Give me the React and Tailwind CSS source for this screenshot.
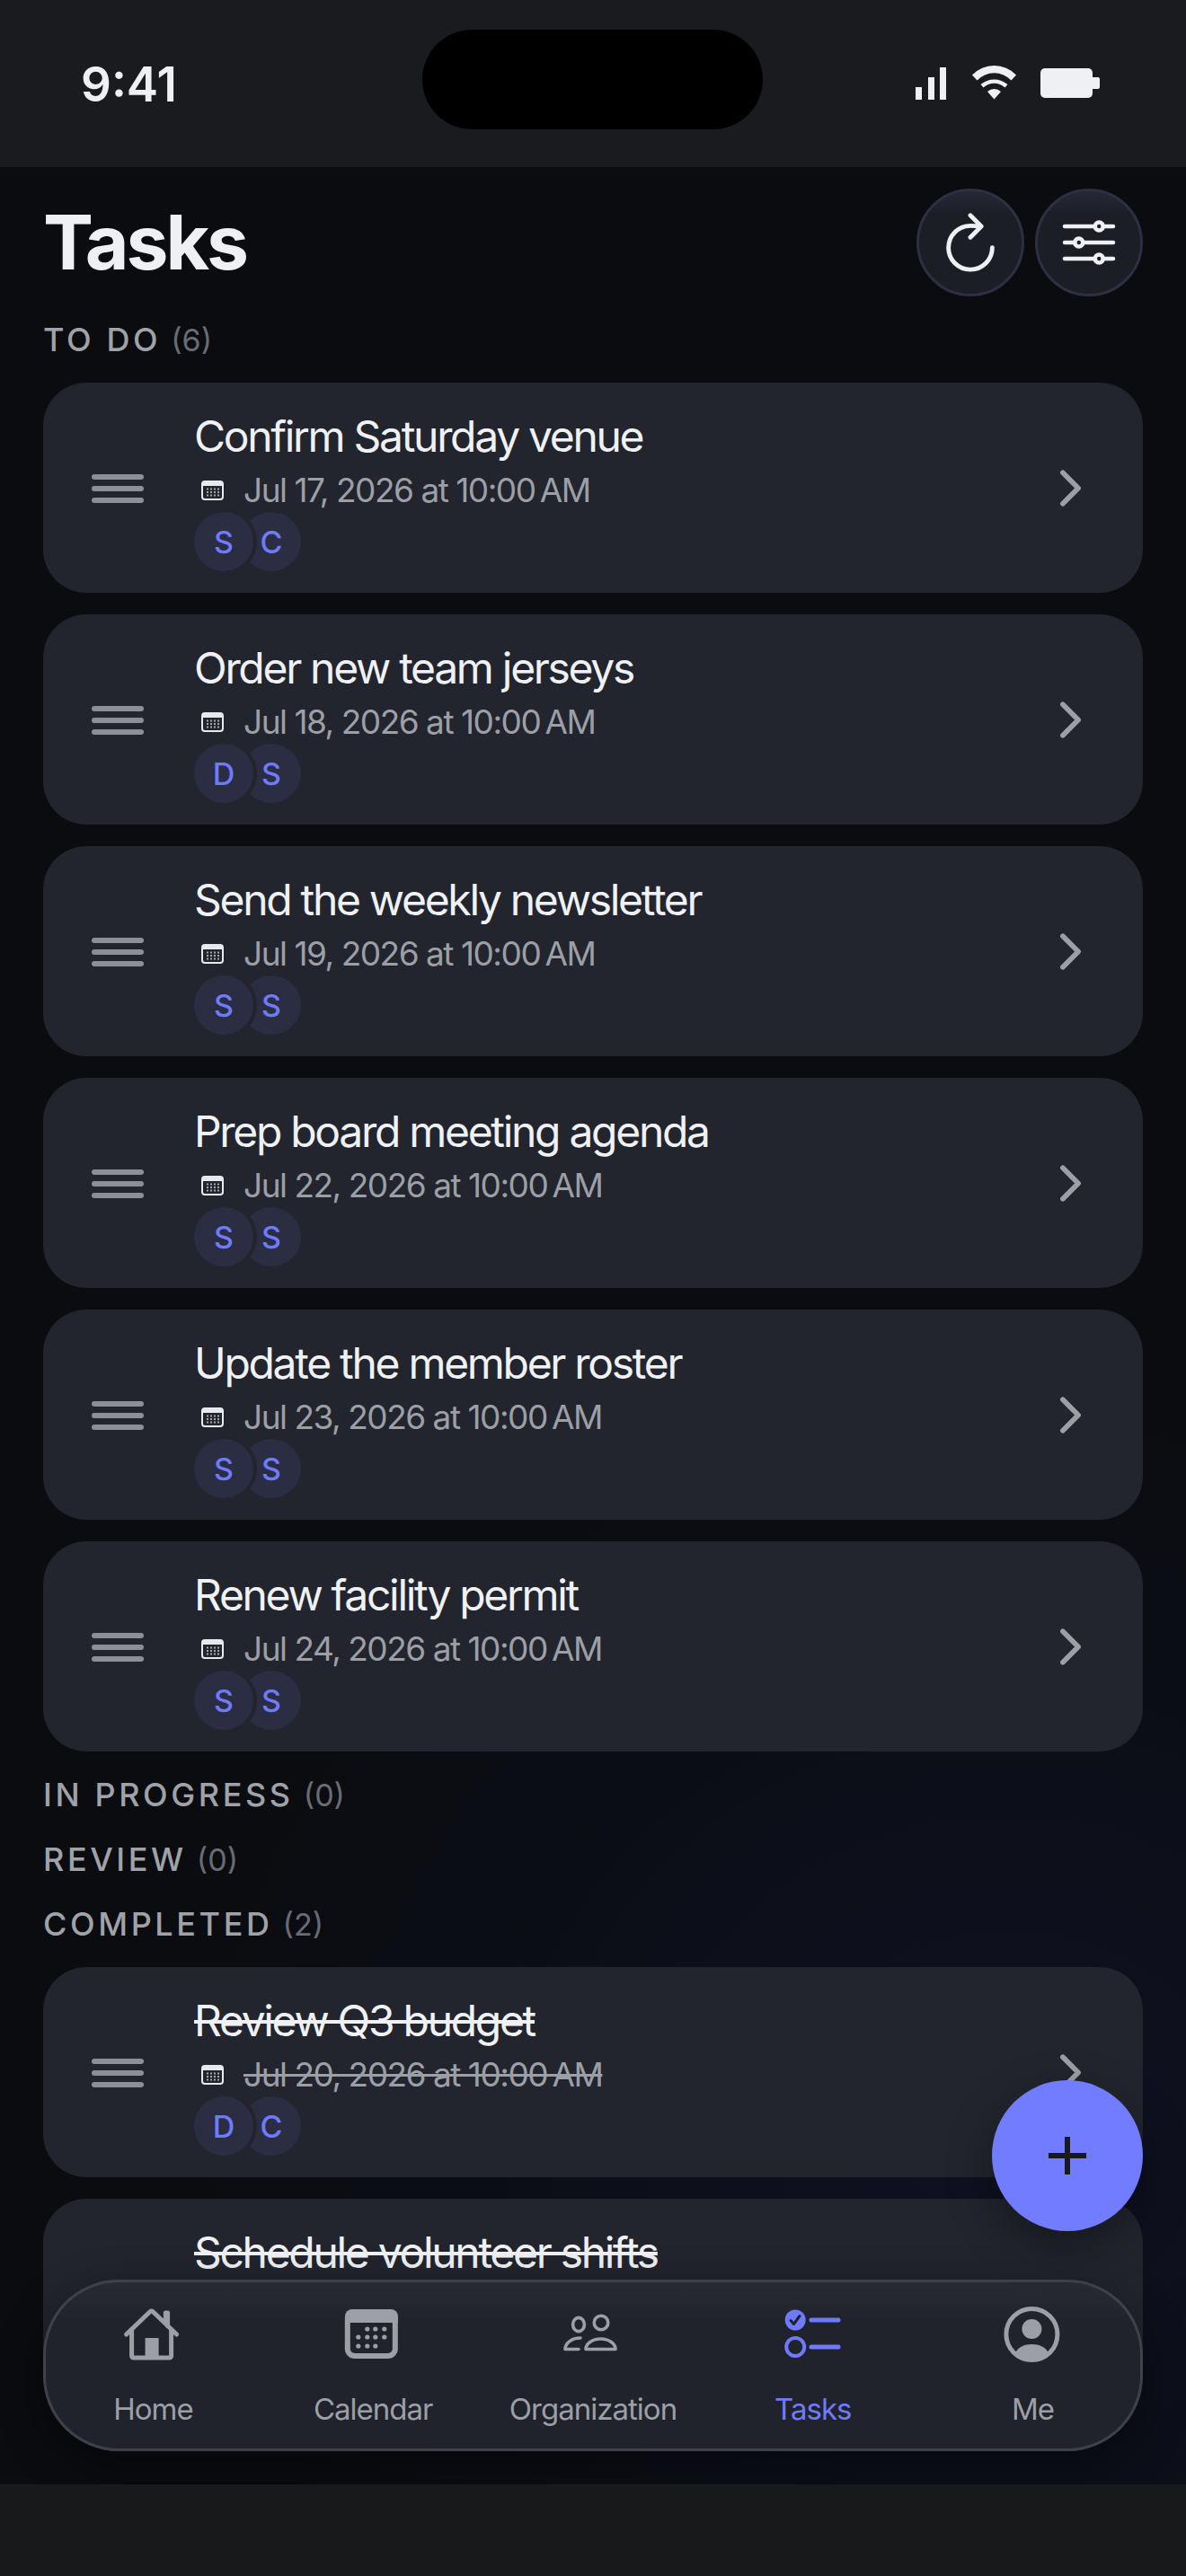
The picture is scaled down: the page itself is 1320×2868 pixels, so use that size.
import React from "react";
import { IoRefreshOutline, IoOptionsOutline, IoChevronForward } from "react-icons/io5";

const font = { fontFamily: "Inter, 'Noto Sans', sans-serif" };

function Handle() {
  return (
    <svg width="58" height="34" viewBox="0 0 58 34" fill="#8d8f96" className="shrink-0">
      <rect x="0" y="0" width="58" height="6" rx="3" />
      <rect x="0" y="13" width="58" height="6" rx="3" />
      <rect x="0" y="26" width="58" height="6" rx="3" />
    </svg>
  );
}

function SmallCal() {
  const xs = [7, 11, 15, 19];
  return (
    <svg width="25" height="22" viewBox="0 0 25 22" className="shrink-0 block">
      <rect x="1" y="1" width="23" height="20" rx="3" fill="#22252d" stroke="#e8e9ec" strokeWidth="2" />
      <path d="M1 6V4a3 3 0 0 1 3-3h17a3 3 0 0 1 3 3v2z" fill="#e8e9ec" />
      {[9.5, 13, 16.5].map((y) => xs.map((x) => <rect key={x + "-" + y} x={x - 1} y={y - 1} width="2" height="2" fill="#a5a7ad" />))}
    </svg>
  );
}

function Avatar({ l, first }) {
  return (
    <div
      className={
        first
          ? "relative z-10 w-[66px] h-[66px] rounded-full bg-[#2b2d42] flex items-center justify-center text-[34px] font-medium text-[#6f7bff] shadow-[0_0_0_4px_#22252d]"
          : "w-[66px] h-[66px] -ml-[13px] rounded-full bg-[#2b2d42] flex items-center justify-center text-[34px] font-medium text-[#6f7bff]"
      }
    >
      {l}
    </div>
  );
}

function Card({ title, date, a, b, done }) {
  return (
    <div className="w-full h-[234px] shrink-0 rounded-[48px] bg-[#22252d] flex items-start">
      <div className="ml-[54px] mt-[102px] w-[58px]">
        <Handle />
      </div>
      <div className="ml-[56px] pt-[30px] flex flex-col">
        <div className={"h-[60px] leading-[60px] text-[48px] tracking-[-0.048em] text-[#f0f1f4] " + (done ? "line-through" : "")}>{title}</div>
        <div className="h-[54px] pt-[6px] flex items-center">
          <div className="ml-2 mr-[22px]">
            <SmallCal />
          </div>
          <span className={"text-[37px] tracking-[-0.04em] text-[#9d9fa6] " + (done ? "line-through" : "")}>{date}</span>
        </div>
        <div className="flex h-[66px]">
          <Avatar l={a} first />
          <Avatar l={b} />
        </div>
      </div>
      <div className="ml-auto mr-[50px] mt-[87px] text-[#9d9fa6]">
        <IoChevronForward size={61} />
      </div>
    </div>
  );
}

function Label({ name, n }) {
  return (
    <div className="h-12 flex items-center shrink-0">
      <span className="text-[36px] font-medium tracking-[0.1em] text-[#a0a2a9]">{name}</span>
      <span className="ml-[11px] text-[34px] text-[#696c74]">({n})</span>
    </div>
  );
}

const G = "#9d9fa6";
const P = "#6f7bff";

function HomeIcon() {
  return (
    <svg width="66" height="66" viewBox="0 0 66 66" className="overflow-visible">
      <g transform="translate(-0.4 1) scale(.125)" fill="none" stroke={G} strokeWidth="40" strokeLinecap="round" strokeLinejoin="round">
        <path d="M80 212v236a16 16 0 0 0 16 16h320a16 16 0 0 0 16-16V212" />
        <path d="M480 256L266.89 52c-5-5.28-16.69-5.34-22 0L32 256" />
        <path d="M400 179V64h-18v69" />
      </g>
      <rect x="24.6" y="37" width="15" height="23" fill={G} />
    </svg>
  );
}

function CalIcon() {
  const rows = [
    [27, [26.8, 35.8, 45.8]],
    [36, [16.8, 26.8, 35.8, 45.8]],
    [46, [16.8, 26.8, 35.8]],
  ];
  return (
    <svg width="66" height="66" viewBox="0 0 66 66">
      <rect x="4.8" y="8" width="53" height="49" rx="8" fill="none" stroke={G} strokeWidth="6" />
      <path d="M2 20v-7a8 8 0 0 1 8-8h43a8 8 0 0 1 8 8v7z" fill={G} />
      {rows.map(([y, xs]) => xs.map((x) => <circle key={x + "-" + y} cx={x} cy={y} r="2.6" fill={G} />))}
    </svg>
  );
}

function OrgIcon() {
  return (
    <svg width="66" height="66" viewBox="0 0 66 66" className="overflow-visible" fill="none" stroke={G} strokeWidth="3.6" strokeLinecap="round" strokeLinejoin="round">
      <ellipse cx="17" cy="22" rx="6.4" ry="7.6" />
      <circle cx="42" cy="20" r="7.8" />
      <path d="M25 49.5c0-6 7-11.5 16.5-11.5S58 43.5 58 49.5z" />
      <path d="M19 37C9 37 2 43 2 49.5h15" />
    </svg>
  );
}

function TasksIcon() {
  return (
    <svg width="66" height="66" viewBox="0 0 66 66" className="overflow-visible" fill="none">
      <circle cx="13.2" cy="17" r="11.5" fill={P} />
      <path d="M8 17.5l3.5 4L18 12.5" stroke="#20232b" strokeWidth="3" strokeLinecap="round" strokeLinejoin="round" />
      <path d="M31 17h30M31 47h30" stroke={P} strokeWidth="5" strokeLinecap="round" />
      <circle cx="13.2" cy="47" r="10" stroke={P} strokeWidth="4" />
    </svg>
  );
}

function MeIcon() {
  return (
    <svg width="66" height="66" viewBox="0 0 66 66" fill="none">
      <circle cx="31.4" cy="33" r="28.5" stroke={G} strokeWidth="5" />
      <circle cx="31.4" cy="27" r="11" fill={G} />
      <path d="M13 54C16 47 23 44 31.4 44S47 47 50 54A28 28 0 0 1 13 54Z" fill={G} />
    </svg>
  );
}

function NavItem({ icon, label, active }) {
  return (
    <div className="flex-1 flex flex-col items-center">
      <div className="w-[66px] h-[66px]">{icon}</div>
      <div className={"mt-[26px] h-12 leading-[48px] text-[33px] tracking-[-0.03em] " + (active ? "text-[#6f7bff]" : "text-[#9d9fa6]")}>{label}</div>
    </div>
  );
}

const tasks = [
  ["Confirm Saturday venue", "Jul 17, 2026 at 10:00\u202fAM", "S", "C"],
  ["Order new team jerseys", "Jul 18, 2026 at 10:00\u202fAM", "D", "S"],
  ["Send the weekly newsletter", "Jul 19, 2026 at 10:00\u202fAM", "S", "S"],
  ["Prep board meeting agenda", "Jul 22, 2026 at 10:00\u202fAM", "S", "S"],
  ["Update the member roster", "Jul 23, 2026 at 10:00\u202fAM", "S", "S"],
  ["Renew facility permit", "Jul 24, 2026 at 10:00\u202fAM", "S", "S"],
];

export default function App() {
  return (
    <div style={font} className="relative w-[1320px] h-[2868px] flex flex-col overflow-hidden bg-[#1a1b1e]">
      <div className="relative h-[186px] shrink-0 bg-[#1a1b1e] flex items-start justify-between">
        <div className="ml-[90px] mt-[64px] text-[53px] leading-[60px] font-semibold text-[#eef0f3]">9:41</div>
        <div className="absolute left-[470px] top-[33px] w-[379px] h-[111px] rounded-full bg-black" />
        <svg width="210" height="40" viewBox="0 0 210 40" className="mt-[73px] mr-[94px]" fill="#eef0f3">
          <rect x="3" y="24" width="7" height="14" />
          <rect x="17" y="13" width="7" height="25" />
          <rect x="30" y="2" width="7" height="36" />
          <path d="M90.5 37.5L83 29a11 11 0 0 1 15 0zM78.5 24.5A17.500 17.500 0 0 1 102.500 24.500L105.500 21A23 23 0 0 0 75.500 21z" />
          <path d="M71.500 16.500A26 26 0 0 1 109.500 16.500L115 10.500A34 34 0 0 0 66 10.500z" />
          <rect x="142" y="3" width="58" height="33" rx="5" />
          <path d="M200 13h6a2 2 0 0 1 2 2v9a2 2 0 0 1-2 2h-6z" />
        </svg>
      </div>

      <div className="relative flex-1 min-h-0 overflow-hidden bg-[#0a0c10] bg-[radial-gradient(ellipse_900px_800px_at_85%_85%,#0f1122_0%,#0c0e18_55%,#0a0c10_100%)]">
        <div className="px-12 pt-6 flex flex-col gap-6">
          <div className="h-[120px] flex items-center justify-between shrink-0">
            <div className="text-[84px] leading-[120px] font-bold tracking-[-0.037em] text-[#eef0f3]">Tasks</div>
            <div className="flex gap-3">
              <div className="w-[120px] h-[120px] rounded-full border-[3px] border-[#2d3042] bg-[linear-gradient(#262838_0%,#1c1e26_22%,#1c1e26_100%)] flex items-center justify-center text-[#eef0f3]">
                <IoRefreshOutline size={78} />
              </div>
              <div className="w-[120px] h-[120px] rounded-full border-[3px] border-[#2d3042] bg-[linear-gradient(#262838_0%,#1c1e26_22%,#1c1e26_100%)] flex items-center justify-center text-[#eef0f3]">
                <IoOptionsOutline size={72} />
              </div>
            </div>
          </div>

          <Label name="TO DO" n={6} />
          {tasks.map(([t, d, a, b]) => (
            <Card key={t} title={t} date={d} a={a} b={b} />
          ))}
          <Label name="IN PROGRESS" n={0} />
          <Label name="REVIEW" n={0} />
          <Label name="COMPLETED" n={2} />
          <Card title="Review Q3 budget" date={"Jul 20, 2026 at 10:00\u202fAM"} a="D" b="C" done />
          <Card title="Schedule volunteer shifts" date={"Jul 21, 2026 at 10:00\u202fAM"} a="S" b="S" done />
        </div>

        <div className="absolute z-20 left-12 top-[2352px] w-[1224px] h-[191px] pt-7 rounded-[84px] flex bg-[linear-gradient(#282b34_0%,#20232b_24%,#20232b_100%)] shadow-[inset_0_0_0_3px_#3f414a,0_16px_50px_rgba(0,0,0,0.45)]">
          <NavItem icon={<HomeIcon />} label="Home" />
          <NavItem icon={<CalIcon />} label="Calendar" />
          <NavItem icon={<OrgIcon />} label="Organization" />
          <NavItem icon={<TasksIcon />} label="Tasks" active />
          <NavItem icon={<MeIcon />} label="Me" />
        </div>

        <div className="absolute z-30 left-[1104px] top-[2130px] w-[168px] h-[168px] rounded-full bg-[#717cff] flex items-center justify-center shadow-[0_18px_50px_rgba(0,0,0,0.35)]">
          <svg width="42" height="42" viewBox="0 0 42 42" stroke="#1a1b1e" strokeWidth="6">
            <path d="M21 0v42M0 21h42" />
          </svg>
        </div>
      </div>

      <div className="h-[102px] shrink-0 bg-[#18191b]" />
    </div>
  );
}
